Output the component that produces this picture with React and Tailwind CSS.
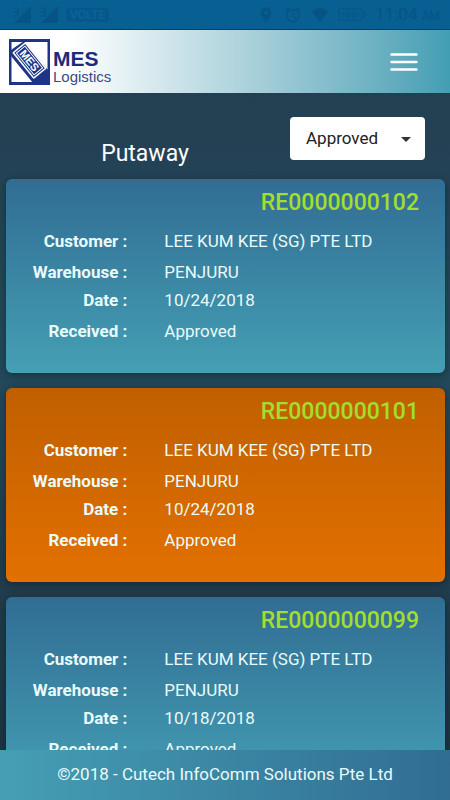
import React, { useState } from "react";
import { MdAlarm, MdLocationOn } from "react-icons/md";

const receipts = [
  { id: "RE0000000102", customer: "LEE KUM KEE (SG) PTE LTD", warehouse: "PENJURU", date: "10/24/2018", received: "Approved" },
  { id: "RE0000000101", customer: "LEE KUM KEE (SG) PTE LTD", warehouse: "PENJURU", date: "10/24/2018", received: "Approved", highlighted: true },
  { id: "RE0000000099", customer: "LEE KUM KEE (SG) PTE LTD", warehouse: "PENJURU", date: "10/18/2018", received: "Approved" },
];

const Signal = () => (
  <svg viewBox="0 0 19 17" className="h-[17px] w-[19px]" aria-hidden="true">
    <path d="M19 0v17H2z" fill="currentColor" />
    <path d="M1 2h5v4H2h4v4H1" fill="none" stroke="currentColor" strokeWidth="1" />
  </svg>
);

const StatusBar = () => (
  <div className="flex h-[30px] shrink-0 items-center border-b border-[#04406f] bg-[#075f92] pr-[10px] pl-3 text-[#065484]">
    <div className="flex items-center gap-2">
      <Signal />
      <Signal />
      <span className="rounded-sm bg-[#06588a] px-1 text-xs leading-[14px] font-bold text-[#07649a]">VOLTE</span>
    </div>
    <div className="ml-auto flex items-center gap-[9px]">
      <MdLocationOn className="h-[18px] w-[18px]" />
      <MdAlarm className="h-[18px] w-[18px]" />
      <svg viewBox="0 0 18 16" className="h-4 w-[18px]" aria-hidden="true">
        <path d="M1 5Q9-3 17 5L9 15z" fill="currentColor" />
      </svg>
      <svg viewBox="0 0 28 13" className="h-[13px] w-7" fill="none" stroke="currentColor" aria-hidden="true">
        <path d="M1 1h23v11H1zM25 4h2v5h-2" />
        <path d="M5 4v5M8 4h3v5H8zM14 4h3v5h-3zM20 4v5" />
      </svg>
      <span className="text-[17px]">
        11:04 <span className="text-xs">AM</span>
      </span>
    </div>
  </div>
);

const Logo = () => (
  <a href="#home" className="flex items-end gap-[3px] font-['Liberation_Sans',sans-serif] text-[#1d2b7c]">
    <svg viewBox="0 0 41 46" className="h-[46px] w-[41px]" aria-hidden="true">
      <rect width="41" height="46" fill="#1d3487" />
      <path d="M2.500 3h36v40h-36z" fill="#fff" />
      <path d="M2 11L15 2l24 29v13H24L2 17z" fill="#1d3487" />
      <g transform="translate(20.500 21.500) rotate(51)">
        <rect x="-17" y="-8.500" width="34" height="17" rx="1" fill="#fff" />
        <rect x="-15.500" y="-7" width="31" height="14" fill="#1d3487" />
        <rect x="-14" y="-5.500" width="28" height="11" fill="none" stroke="#fff" strokeWidth="1" />
        <text x="0" y="4" textAnchor="middle" fontSize="11" fontWeight="700" fill="#fff">MES</text>
      </g>
    </svg>
    <span className="flex flex-col">
      <span className="text-[21px] leading-5 font-bold">MES</span>
      <span className="text-[15px] leading-4 text-[#3a4a86]">Logistics</span>
    </span>
  </a>
);

const Header = () => (
  <header className="flex h-[63px] shrink-0 items-center justify-between bg-linear-to-r from-white from-15% to-[#429eb3] pr-6 pl-[9px]">
    <Logo />
    <button type="button" aria-label="Menu" className="p-2">
      <svg viewBox="0 0 28 18" className="h-[18px] w-7" stroke="#fff" strokeWidth="2.400" strokeLinecap="round" aria-hidden="true">
        <path d="M1.500 1.500h25M1.500 9h25M1.500 16.500h25" />
      </svg>
    </button>
  </header>
);

const Field = ({ label, value }) => (
  <div className="flex leading-7">
    <dt className="w-1/3 pr-[25px] text-right font-bold">{label} :</dt>
    <dd className="flex-1 pl-3">{value}</dd>
  </div>
);

const ReceiptCard = ({ receipt }) => (
  <article
    className={`rounded-md bg-linear-to-b pt-2 pb-7 text-[17px] text-[#e9fbfb] shadow-[0_2px_8px_rgba(0,0,0,0.35)] ${
      receipt.highlighted ? "from-[#c05f00] to-[#e37000]" : "from-[#316d93] to-[#459fb4]"
    }`}
  >
    <h2 className="mb-2 pr-[26px] text-right text-[23px] leading-8 font-medium text-[#a4de2c]">{receipt.id}</h2>
    <dl className="flex flex-col gap-[3px]">
      <Field label="Customer" value={receipt.customer} />
      <div>
        <Field label="Warehouse" value={receipt.warehouse} />
        <Field label="Date" value={receipt.date} />
      </div>
      <Field label="Received" value={receipt.received} />
    </dl>
  </article>
);

export default function App() {
  const [status, setStatus] = useState("Approved");

  return (
    <div className="flex h-screen flex-col font-[Roboto,sans-serif]">
      <StatusBar />
      <Header />
      <main className="min-h-0 flex-1 overflow-hidden bg-linear-to-b from-[#243f52] via-[#234a5c] via-40% to-[#1e3444] pr-[5px] pl-[6px]">
        <div className="flex items-end pt-6 pr-5 pb-[9px]">
          <h1 className="flex-1 pr-1.5 text-center text-[23px] leading-8 text-white">Putaway</h1>
          <div className="relative mb-[10px]">
            <select
              aria-label="Status"
              value={status}
              onChange={(e) => setStatus(e.target.value)}
              className="h-[43px] w-[135px] appearance-none rounded-sm bg-white pl-4 text-[17px] text-[#222]"
            >
              <option>Approved</option>
              <option>Pending</option>
            </select>
            <svg viewBox="0 0 10 5" className="pointer-events-none absolute top-5 right-[14px] h-[5px] w-[10px]" aria-hidden="true">
              <path d="M0 0h10L5 5z" fill="#333" />
            </svg>
          </div>
        </div>
        <div className="flex flex-col gap-[15px]">
          {receipts.map((receipt) => (
            <ReceiptCard key={receipt.id} receipt={receipt} />
          ))}
        </div>
      </main>
      <footer className="h-[50px] shrink-0 bg-linear-to-r from-[#459fb4] to-[#316d93] text-center text-[17px] leading-[48px] text-[#e9fbfb]">
        ©2018 - Cutech InfoComm Solutions Pte Ltd
      </footer>
    </div>
  );
}
